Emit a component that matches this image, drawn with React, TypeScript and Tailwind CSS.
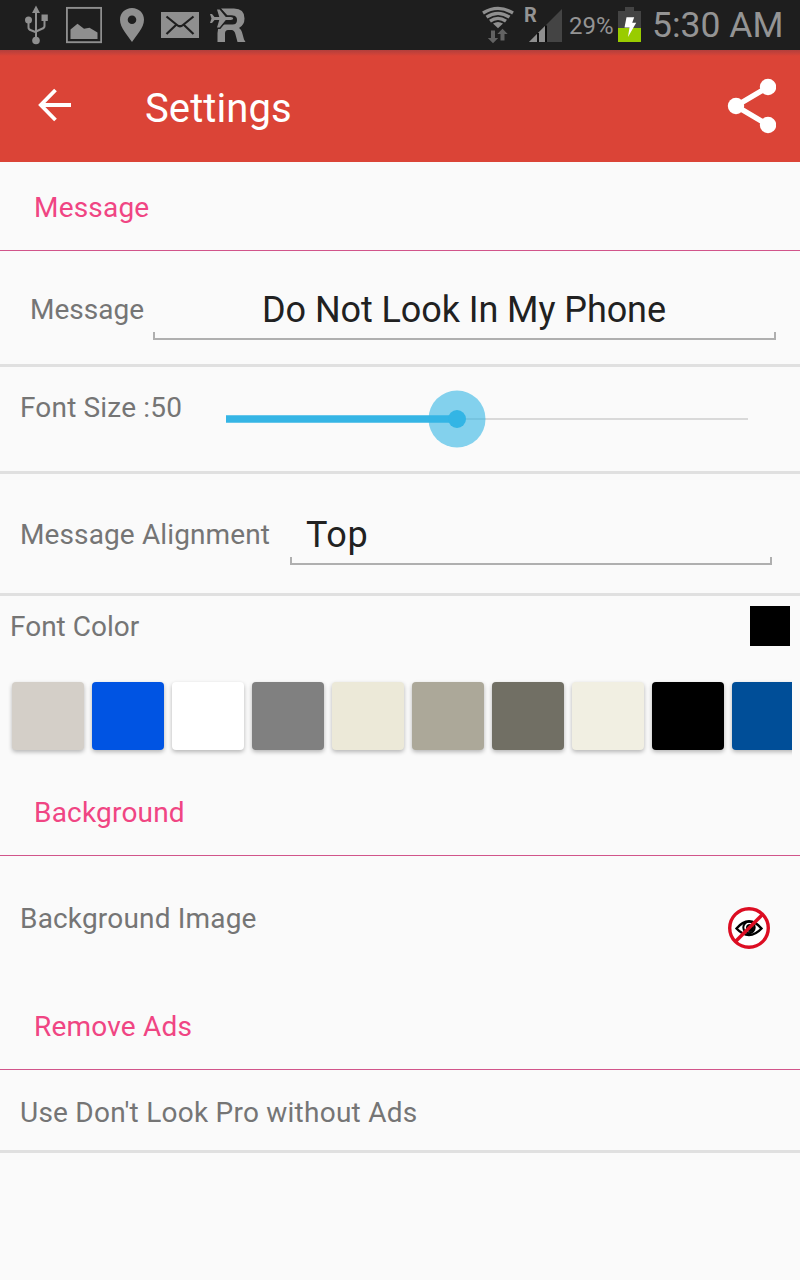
import { useState } from 'react';
import type { ReactNode } from 'react';

const swatches = [
  '#d4cfc8', '#0054e3', '#ffffff', '#808080', '#ece9d8',
  '#aca899', '#716f64', '#f1efe2', '#000000', '#004e98',
];

function UsbIcon() {
  return (
    <svg className="ml-6 w-6 h-[50px]" viewBox="24 0 24 50" fill="none" stroke="#8f8f8f" strokeWidth="2">
      <path d="M36 11v27M28.500 20v7.500q0 2 2.500 2.800l5 2M44.500 18v8q0 2-2.500 2.800l-6 2.700" />
      <path d="M36 5.500l4 7.500h-8z" fill="#8f8f8f" stroke="none" />
      <circle cx="28.500" cy="20" r="3.500" fill="#8f8f8f" stroke="none" />
      <path d="M41.500 14.500h6.300v6.500h-6.300z" fill="#8f8f8f" stroke="none" />
      <circle cx="36" cy="40.500" r="3.800" fill="#8f8f8f" stroke="none" />
    </svg>
  );
}

function PictureIcon() {
  return (
    <svg className="ml-[18px] w-9 h-[50px]" viewBox="66 0 36 50">
      <rect x="66.900" y="7.900" width="34.300" height="34.300" fill="none" stroke="#8f8f8f" strokeWidth="1.900" />
      <path d="M70.500 39V29.500l7-5.700 6.500 5 5.500-1 8 4.700V39z" fill="#8f8f8f" />
    </svg>
  );
}

function PinIcon() {
  return (
    <svg className="ml-[18px] w-6 h-[50px]" viewBox="120 0 24 50">
      <path
        d="M132 8c-6.700 0-12 5-12 11.700 0 8 7.500 15.300 12 22.300 4.500-7 12-14.300 12-22.300C144 13 138.700 8 132 8zm0 7.500a4.300 4.300 0 1 1 0 8.600 4.300 4.300 0 0 1 0-8.600z"
        fill="#8f8f8f"
        fillRule="evenodd"
      />
    </svg>
  );
}

function MailIcon() {
  return (
    <svg className="ml-[17px] w-[38px] h-[50px]" viewBox="161 0 38 50">
      <path d="M161 12h38v26h-38z" fill="#8f8f8f" />
      <path d="M166.500 16.500l10.500 8.500q3 2.500 6 0l10.500-8.500M166.500 34l9.500-9M193.500 34l-9.500-9" fill="none" stroke="#1e1e1e" strokeWidth="2.200" />
    </svg>
  );
}

// Plane flying into the letter R
function RoamingPlaneIcon() {
  return (
    <svg className="ml-[11px] w-9 h-[50px]" viewBox="210 0 36 50">
      <path
        d="M221 8.500h13q10.500 0 10.500 10 0 6.500-5.500 9.500 2.500 1.500 3.500 6l1.500 5.500 1.500 2.500h-8l-2-7.500q-1-4.500-4-4.500h-3.500q-3 0-3 3.500v8.500H217.500v-9q0-8.500 7-8.500h8q4.500 0 4.500-4.500t-4.500-4.500h-5z"
        fill="#8f8f8f"
      />
      <path
        d="M210 14h2l2.500 3h4.800l-2.300-7.500h2.600l6.200 7.500h5q2.400.2 2.400 1.500t-2.400 1.500h-5l-6.200 7.500H217l2.300-7.500h-4.800l-2.500 3h-2l1.500-4.500z"
        fill="#8f8f8f"
        stroke="#1e1e1e"
        strokeWidth="3"
        paintOrder="stroke"
      />
    </svg>
  );
}

function WifiIcon() {
  return (
    <svg className="w-8 h-[50px]" viewBox="482 0 32 50">
      <g fill="none" stroke="#8f8f8f" strokeWidth="3.300">
        <path d="M483 13Q498 3.800 513 13" />
        <path d="M486.500 17.200Q498 9.500 509.500 17.200" />
        <path d="M490 21.200Q498 15.500 506 21.200" />
      </g>
      <path d="M493 23.500q5-3.200 10 0l-5 4.700z" fill="#8f8f8f" />
      <path d="M491 30.500h4V38h3.200l-5.200 5.200-5.200-5.200h3.200zM500.500 40.500V34h-3.200l5.200-5.200 5.200 5.200h-3.200v6.500z" fill="#626262" />
    </svg>
  );
}

function SignalIcon() {
  return (
    <svg className="-ml-px w-[33px] h-[50px]" viewBox="529 0 33 50">
      <path d="M562 9v33h-33z" fill="#444" />
      <path d="M545 26v16h-16z" fill="#8f8f8f" />
      <path d="M538 33v9M546 25.500V42" stroke="#050505" strokeWidth="1.800" />
    </svg>
  );
}

function BatteryIcon() {
  return (
    <svg className="ml-[5px] w-[23px] h-[50px]" viewBox="618 0 23 50">
      <path d="M625 7h9v4h7v31h-23V11h7z" fill="#444" />
      <path d="M618 28h23v14h-23z" fill="#99cc00" />
      <path d="M626.500 17.200h7.700l-2 5.600h4L628 37l1.500-9.500h-5z" fill="#fff" />
    </svg>
  );
}

function NoLookIcon() {
  return (
    <svg className="w-[42px] h-[42px]" viewBox="0 0 42 42" fill="none">
      <circle cx="21" cy="21" r="19.300" fill="#fff" stroke="#dc0d22" strokeWidth="3.400" />
      <path d="M8.500 21.500Q14.500 14.200 21 14.200T33.500 21.500Q27.500 28 21 28T8.500 21.500z" stroke="#000" strokeWidth="2.400" />
      <circle cx="21" cy="20.500" r="5.700" stroke="#000" strokeWidth="2" />
      <circle cx="22" cy="21" r="4" fill="#000" />
      <path d="M7.500 34.500l27-27" stroke="#dc0d22" strokeWidth="3.600" />
    </svg>
  );
}

function StatusBar() {
  return (
    <div className="flex h-[50px] bg-[#1e1e1e] text-[#949494]">
      <UsbIcon />
      <PictureIcon />
      <PinIcon />
      <MailIcon />
      <RoamingPlaneIcon />
      <div className="ml-auto flex">
        <WifiIcon />
        <span className="ml-[10px] w-[6px] pt-[5px] text-[20px] leading-5 font-bold">R</span>
        <SignalIcon />
        <span className="ml-[7px] w-[44px] whitespace-nowrap pt-[10px] text-[24px] leading-8">29%</span>
        <BatteryIcon />
        <span className="ml-[11px] mr-[15px] w-[133px] whitespace-nowrap pt-[5px] text-[35.5px] leading-10">5:30 AM</span>
      </div>
    </div>
  );
}

function SectionHeader({ children }: { children: ReactNode }) {
  return (
    <h2 className="h-[89px] border-b border-[#d1548a] pl-[34px] pt-[30px] text-[28px] leading-8 tracking-[0.2px] text-[#f04583]">
      {children}
    </h2>
  );
}

export default function App() {
  const [message] = useState('Do Not Look In My Phone');
  const [fontSize] = useState(50);
  const [fontColor, setFontColor] = useState('#000000');

  return (
    <div className="h-[1280px] w-[800px] overflow-hidden bg-[#fafafa] font-['Roboto',sans-serif] text-[#757575]">
      <StatusBar />

      {/* App bar */}
      <header className="flex h-28 bg-[#db4437] bg-linear-to-b from-[#b23f3c] via-[#db4437] via-[6px] to-[#db4437] text-white">
        <svg className="ml-[38px] mt-[38px] h-[34px] w-[34px]" viewBox="0 0 34 34" fill="none" stroke="#fff" strokeWidth="3.800">
          <path d="M33 17H4M17.500 2L2.800 17l14.700 15" />
        </svg>
        <h1 className="ml-[73px] pt-[35px] text-[40px] leading-[48px] tracking-[0.1px]">Settings</h1>
        <svg className="ml-auto mr-6 mt-7 h-14 w-[50px]" viewBox="726 78 50 56" fill="#fff" stroke="#fff">
          <path d="M768 87l-32 19 32 19" fill="none" strokeWidth="5.500" />
          <circle cx="768" cy="87" r="8.200" stroke="none" />
          <circle cx="736" cy="106" r="8.200" stroke="none" />
          <circle cx="768" cy="125" r="8.200" stroke="none" />
        </svg>
      </header>

      <SectionHeader>Message</SectionHeader>

      <div className="flex h-[116px] border-b-[3px] border-[#e0e0e0] pl-[30px] pr-6 text-[28px] leading-8">
        <span className="w-[123px] pt-[43px]">Message</span>
        <div className="flex-1">
          <div className="pr-px pt-[37px] text-center text-[36px] leading-[44px] tracking-[-0.08px] text-[#212121]">{message}</div>
          <div className="h-2 border-x-2 border-b-2 border-[#afafaf]" />
        </div>
      </div>

      <div className="flex h-[107px] border-b-[3px] border-[#e0e0e0] pl-5 text-[28px] leading-8">
        <span className="w-[206px] pt-[25px] tracking-[0.17px]">Font Size :{fontSize}</span>
        <svg className="h-[104px] w-[522px] overflow-visible" viewBox="226 367 522 104">
          <path d="M226 419h522" stroke="#d9d9d9" strokeWidth="2" />
          <path d="M226 419h231" stroke="#35b5e5" strokeWidth="7.300" />
          <circle cx="457" cy="419" r="28.500" fill="#33b5e5" fillOpacity="0.600" />
          <circle cx="457" cy="419" r="9" fill="#33b5e5" />
        </svg>
      </div>

      <div className="flex h-[122px] border-b-[3px] border-[#e0e0e0] pl-5 pr-7 text-[28px] leading-8">
        <span className="w-[270px] pt-[45px] tracking-[0.12px]">Message Alignment</span>
        <div className="flex-1">
          <div className="pl-4 pt-[39px] text-[36px] leading-[44px] tracking-[0.6px] text-[#212121]">Top</div>
          <div className="h-2 border-x-2 border-b-2 border-[#afafaf]" />
        </div>
      </div>

      {/* Font color */}
      <div className="flex h-[76px] justify-between px-[10px] pt-[10px] text-[28px] leading-[42px]">
        <span>Font Color</span>
        <div className="h-10 w-10" style={{ backgroundColor: fontColor }} />
      </div>
      <div className="ml-2 mr-2 flex h-[95px] gap-2 overflow-hidden pl-1 pt-[10px]">
        {swatches.map(color => (
          <button
            key={color}
            aria-label={color}
            onClick={() => setFontColor(color)}
            className="h-[68px] w-[72px] shrink-0 rounded-[4px] shadow-[0_2px_4px_rgba(0,0,0,0.28)]"
            style={{ backgroundColor: color }}
          />
        ))}
      </div>

      <SectionHeader>Background</SectionHeader>
      <div className="flex h-[125px] justify-between pl-5 pr-[30px] text-[28px] leading-8">
        <span className="pt-[47px] tracking-[0.18px]">Background Image</span>
        <div className="pt-[51px]">
          <NoLookIcon />
        </div>
      </div>

      <SectionHeader>Remove Ads</SectionHeader>
      <div className="h-[83px] border-b-[3px] border-[#e0e0e0] pl-5 pt-[27px] text-[28px] leading-8 tracking-[0.24px]">
        Use Don't Look Pro without Ads
      </div>
    </div>
  );
}
